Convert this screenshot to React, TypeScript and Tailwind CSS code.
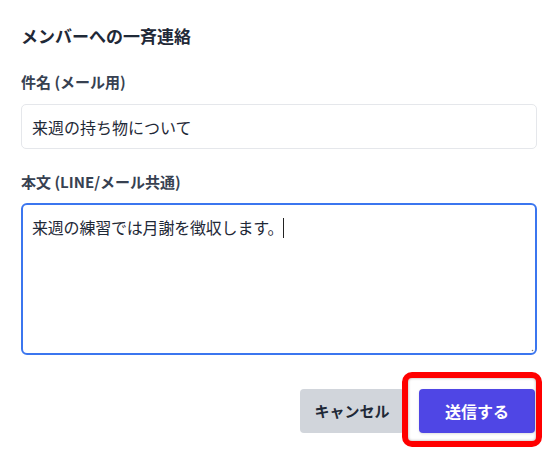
export default function App() {
  return (
    <div
      className="w-[552px] h-[452px] bg-white pl-[21px] pr-[15px] pt-[23px] text-[#1f2937]"
      style={{ fontFamily: '"Noto Sans CJK JP", "Noto Sans", sans-serif' }}
    >
      <h2 className="text-[17px] font-bold leading-[26px] text-[#1f2937]">メンバーへの一斉連絡</h2>

      <div className="mt-[23px]">
        <label className="block text-[15px] font-semibold leading-[20px] text-[#374151]">件名 (メール用)</label>
        <div className="mt-[12px] h-[45px] flex items-center rounded-[5px] border border-[#e5e7eb] px-[10px] text-[16px]">
          来週の持ち物について
        </div>
      </div>

      <div className="mt-[23px]">
        <label className="block text-[15px] font-semibold leading-[20px] text-[#374151]">本文 (LINE/メール共通)</label>
        <div className="relative mt-[11px] h-[152px] rounded-[6px] border-2 border-[#3b76ef] px-[9px] pt-[10px] text-[16px] leading-[24px] tracking-[-0.2px]">
          来週の練習では月謝を徴収します。
          <span className="inline-block w-px h-[20px] bg-[#222] align-[-4px]" />
          <svg className="absolute right-[1px] bottom-[1px]" width="6" height="6" viewBox="0 0 6 6">
            <circle cx="4.5" cy="4.5" r="0.8" fill="#777" />
          </svg>
        </div>
      </div>

      <div className="mt-[34px] flex justify-end gap-[15px] pr-[2px]">
        <button className="w-[104px] h-[44px] rounded-[4px] bg-[#d1d5db] text-[15px] font-bold text-[#1f2937]">
          キャンセル
        </button>
        <div className="relative">
          <button className="w-[116px] h-[44px] rounded-[4px] bg-[#4f46e5] text-[16px] font-bold text-white shadow-sm">
            送信する
          </button>
          <div className="absolute -left-[17px] -right-[7px] -top-[17px] -bottom-[14px] rounded-[10px] border-[6px] border-[#ff0000] shadow-[inset_0_0_3px_rgba(0,0,0,0.35)] pointer-events-none" />
        </div>
      </div>
    </div>
  );
}
